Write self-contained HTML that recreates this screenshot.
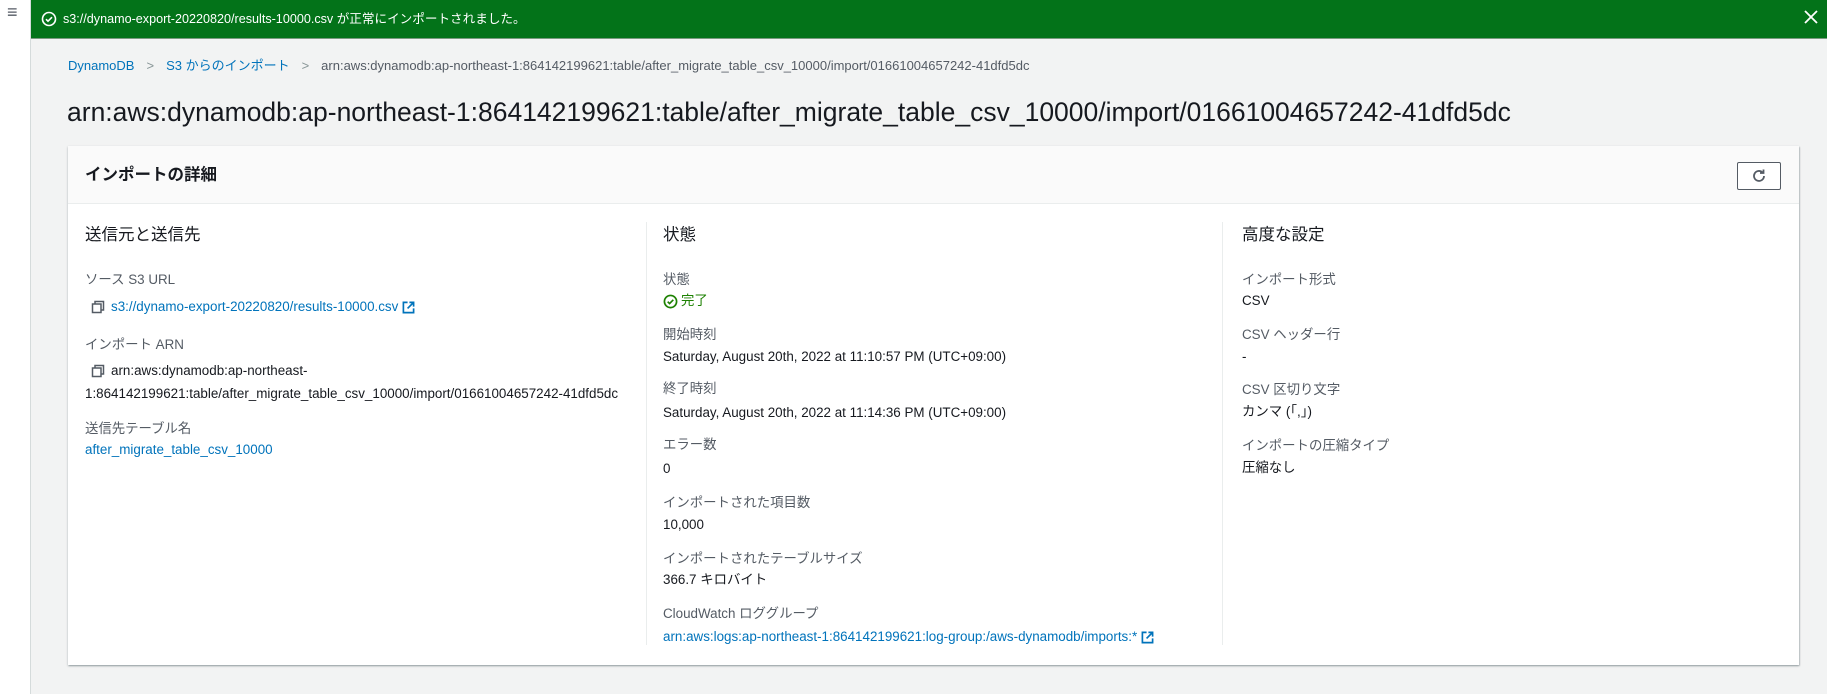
<!DOCTYPE html>
<html><head><meta charset="utf-8"><style>
*{margin:0;padding:0;box-sizing:border-box}
body{width:1827px;height:694px;background:#f2f3f3;font-family:"Liberation Sans","Noto Sans CJK JP",sans-serif;color:#16191f;position:relative;overflow:hidden;font-size:13.4px}
.a{position:absolute;white-space:nowrap;line-height:20px}
.lab{color:#545b64}
.lnk{color:#0073bb}
.h{font-size:16.5px}
svg{display:inline-block;vertical-align:middle}
</style></head><body>
<div style="position:absolute;left:0;top:0;width:31px;height:694px;background:#fff;border-right:1px solid #d5dbdb"></div>
<div class="a" style="left:7px;top:2px;font-size:18px;color:#545b64">&#8801;</div>
<div style="position:absolute;left:31px;top:0;width:1796px;height:39px;background:#037319;border-bottom:1px solid #7a9a80"></div>
<svg style="position:absolute;left:41px;top:11px" width="16" height="16" viewBox="0 0 16 16"><circle cx="8" cy="8" r="6.5" fill="none" stroke="#fff" stroke-width="1.6"/><path d="M5 8.2l2 2 4-4" fill="none" stroke="#fff" stroke-width="1.6"/></svg>
<div class="a" style="left:63px;top:9px;color:#fff;font-size:12.6px">s3://dynamo-export-20220820/results-10000.csv が正常にインポートされました。</div>
<svg style="position:absolute;left:1804px;top:10px" width="14" height="14" viewBox="0 0 14 14"><path d="M1 1l12 12M13 1L1 13" stroke="#fff" stroke-width="1.8"/></svg>

<div class="a" style="left:68px;top:56px;font-size:13px"><span class="lnk">DynamoDB</span><span style="color:#879596;margin:0 12px">&gt;</span><span class="lnk">S3 からのインポート</span><span style="color:#879596;margin:0 12px">&gt;</span><span style="color:#545b64">arn:aws:dynamodb:ap-northeast-1:864142199621:table/after_migrate_table_csv_10000/import/01661004657242-41dfd5dc</span></div>
<div class="a" style="left:67px;top:96px;font-size:26.5px;line-height:32px">arn:aws:dynamodb:ap-northeast-1:864142199621:table/after_migrate_table_csv_10000/import/01661004657242-41dfd5dc</div>

<div style="position:absolute;left:68px;top:146px;width:1731px;height:519px;background:#fff;box-shadow:0 1px 2px rgba(0,28,36,.3),1px 1px 1px rgba(0,28,36,.15)">
<div style="height:58px;background:#fafafa;border-bottom:1px solid #eaeded"></div>
</div>
<div class="a" style="left:85px;top:165px;font-size:16.5px;font-weight:bold">インポートの詳細</div>
<div style="position:absolute;left:1737px;top:162px;width:44px;height:28px;border:1px solid #545b64;border-radius:2px;background:#fff"></div>
<svg style="position:absolute;left:1751px;top:168px" width="16" height="16" viewBox="0 0 16 16"><path d="M13 8a5 5 0 1 1-1.6-3.7" fill="none" stroke="#545b64" stroke-width="1.8"/><path d="M12.5 1.5v3.5H9" fill="none" stroke="#545b64" stroke-width="1.8"/></svg>

<div style="position:absolute;left:646px;top:222px;width:1px;height:423px;background:#eaeded"></div>
<div style="position:absolute;left:1222px;top:222px;width:1px;height:423px;background:#eaeded"></div>

<div class="a h" style="left:85px;top:225px">送信元と送信先</div>
<div class="a lab" style="left:85px;top:270px">ソース S3 URL</div>
<div class="a lnk" style="left:91px;top:297px"><svg width="14" height="14" viewBox="0 0 14 14" style="margin-right:6px"><path d="M4 4V1.5h8.5V10H10" fill="none" stroke="#545b64" stroke-width="1.5"/><rect x="1.5" y="4" width="8.5" height="8.5" fill="none" stroke="#545b64" stroke-width="1.5"/></svg>s3://dynamo-export-20220820/results-10000.csv <svg width="13" height="13" viewBox="0 0 14 14"><path d="M6 1.5H1.5v11h11V8M8 1.5h4.5V6M12.5 1.5L6 8" fill="none" stroke="#0073bb" stroke-width="1.8"/></svg></div>
<div class="a lab" style="left:85px;top:335px">インポート ARN</div>
<div class="a" style="left:91px;top:361px"><svg width="14" height="14" viewBox="0 0 14 14" style="margin-right:6px"><path d="M4 4V1.5h8.5V10H10" fill="none" stroke="#545b64" stroke-width="1.5"/><rect x="1.5" y="4" width="8.5" height="8.5" fill="none" stroke="#545b64" stroke-width="1.5"/></svg>arn:aws:dynamodb:ap-northeast-</div>
<div class="a" style="left:85px;top:384px">1:864142199621:table/after_migrate_table_csv_10000/import/01661004657242-41dfd5dc</div>
<div class="a lab" style="left:85px;top:419px">送信先テーブル名</div>
<div class="a lnk" style="left:85px;top:440px">after_migrate_table_csv_10000</div>

<div class="a h" style="left:663px;top:225px">状態</div>
<div class="a lab" style="left:663px;top:270px">状態</div>
<div class="a" style="left:663px;top:291px;color:#1d8102"><svg width="15" height="15" viewBox="0 0 16 16" style="margin-right:3px"><circle cx="8" cy="8" r="6.5" fill="none" stroke="#1d8102" stroke-width="1.8"/><path d="M5 8.2l2 2 4-4" fill="none" stroke="#1d8102" stroke-width="1.8"/></svg>完了</div>
<div class="a lab" style="left:663px;top:325px">開始時刻</div>
<div class="a" style="left:663px;top:347px">Saturday, August 20th, 2022 at 11:10:57 PM (UTC+09:00)</div>
<div class="a lab" style="left:663px;top:379px">終了時刻</div>
<div class="a" style="left:663px;top:403px">Saturday, August 20th, 2022 at 11:14:36 PM (UTC+09:00)</div>
<div class="a lab" style="left:663px;top:435px">エラー数</div>
<div class="a" style="left:663px;top:459px">0</div>
<div class="a lab" style="left:663px;top:493px">インポートされた項目数</div>
<div class="a" style="left:663px;top:515px">10,000</div>
<div class="a lab" style="left:663px;top:549px">インポートされたテーブルサイズ</div>
<div class="a" style="left:663px;top:570px">366.7 キロバイト</div>
<div class="a lab" style="left:663px;top:604px">CloudWatch ロググループ</div>
<div class="a lnk" style="left:663px;top:627px">arn:aws:logs:ap-northeast-1:864142199621:log-group:/aws-dynamodb/imports:* <svg width="13" height="13" viewBox="0 0 14 14"><path d="M6 1.5H1.5v11h11V8M8 1.5h4.5V6M12.5 1.5L6 8" fill="none" stroke="#0073bb" stroke-width="1.8"/></svg></div>

<div class="a h" style="left:1242px;top:225px">高度な設定</div>
<div class="a lab" style="left:1242px;top:270px">インポート形式</div>
<div class="a" style="left:1242px;top:291px">CSV</div>
<div class="a lab" style="left:1242px;top:325px">CSV ヘッダー行</div>
<div class="a" style="left:1242px;top:347px">-</div>
<div class="a lab" style="left:1242px;top:380px">CSV 区切り文字</div>
<div class="a" style="left:1242px;top:402px">カンマ (「,」)</div>
<div class="a lab" style="left:1242px;top:436px">インポートの圧縮タイプ</div>
<div class="a" style="left:1242px;top:458px">圧縮なし</div>
</body></html>
